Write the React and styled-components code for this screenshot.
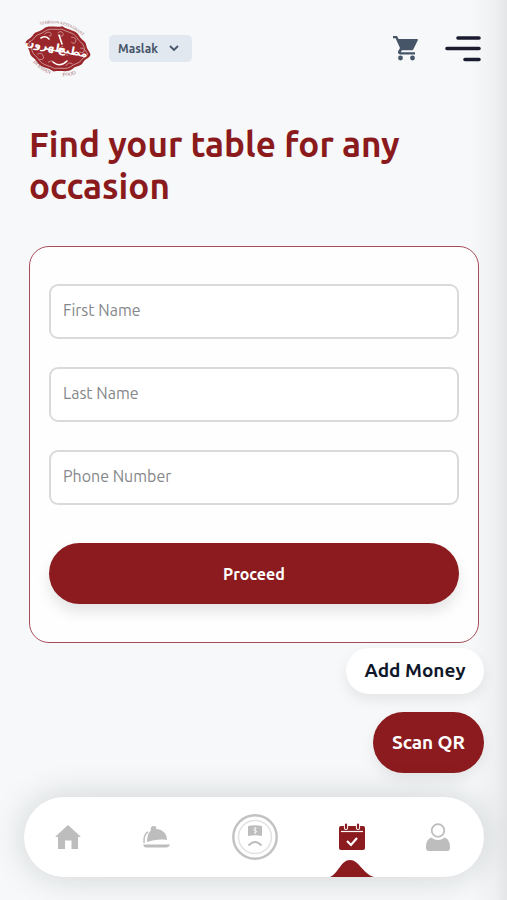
import React, { useState } from 'react';
import styled, { createGlobalStyle } from 'styled-components';

const GlobalStyle = createGlobalStyle`
  * {
    box-sizing: border-box;
  }
  body {
    margin: 0;
    background-color: #f6f8f9;
    font-family: 'Ubuntu', 'Noto Sans', sans-serif;
  }
  button, input, select {
    font-family: inherit;
  }
`;

const Page = styled.div`
  display: flex;
  flex-direction: column;
  min-height: 100vh;
  padding: 20px 23px 23px 24px;
  overflow: hidden;
  background: linear-gradient(to left, #e3e5e7 0, #eef0f1 12px, #f6f8f9 36px);
`;

const Header = styled.header`
  display: flex;
  align-items: center;
  height: 56px;
`;

const LogoLink = styled.a`
  display: block;
  width: 70px;
  height: 60px;
  margin-right: 15px;
`;

const BranchPicker = styled.label`
  display: grid;
  align-items: center;
  width: 83px;
  height: 27px;
  border-radius: 5px;
  background-color: #e2e8f0;
  color: #475569;

  > * {
    grid-area: 1 / 1;
  }
  > svg {
    justify-self: end;
    margin-right: 12px;
    pointer-events: none;
  }
`;

const BranchSelect = styled.select`
  appearance: none;
  width: 100%;
  height: 100%;
  padding: 0 24px 0 9px;
  border: none;
  background: transparent;
  color: inherit;
  font-size: 12px;
  font-weight: 600;
`;

const Actions = styled.div`
  display: flex;
  align-items: center;
  gap: 27px;
  margin-left: auto;
  padding-right: 3px;
`;

const IconButton = styled.button`
  display: flex;
  padding: 0;
  border: none;
  background: none;
  cursor: pointer;
`;

const Title = styled.h1`
  margin: 47px 5px 39px;
  color: #8b1a1d;
  font-size: 35px;
  font-weight: 600;
  line-height: 42px;
`;

const Form = styled.form`
  display: flex;
  flex-direction: column;
  gap: 28px;
  margin: 0 5px;
  padding: 37px 19px 38px;
  border: 1px solid #a64d59;
  border-radius: 20px;
  background-color: #fefefe;
`;

const Field = styled.input`
  width: 100%;
  height: 55px;
  padding: 0 12px 4px;
  border: 2px solid #dadada;
  border-radius: 9px;
  background-color: #fff;
  color: #333;
  font-size: 16px;

  &::placeholder {
    color: #85878a;
    opacity: 1;
  }
`;

const ProceedButton = styled.button`
  height: 61px;
  margin-top: 10px;
  border: none;
  border-radius: 31px;
  background-color: #8b1b1e;
  box-shadow: 0 8px 14px rgba(0, 0, 0, 0.1);
  color: #fff;
  font-size: 16px;
  font-weight: 600;
  cursor: pointer;
`;

const FloatingActions = styled.div`
  display: flex;
  flex-direction: column;
  align-items: flex-end;
  gap: 18px;
  margin-top: 5px;
`;

const PillButton = styled.button`
  min-width: ${props => (props.$primary ? 111 : 138)}px;
  height: ${props => (props.$primary ? 61 : 46)}px;
  padding: 0 16px 2px;
  border: none;
  border-radius: 31px;
  background-color: ${props => (props.$primary ? '#8b1b1e' : '#fff')};
  box-shadow: 0 6px 14px rgba(0, 0, 0, 0.08);
  color: ${props => (props.$primary ? '#fff' : '#0f172a')};
  font-size: 19px;
  font-weight: 600;
  cursor: pointer;
`;

const NavBar = styled.nav`
  display: flex;
  justify-content: space-between;
  height: 80px;
  margin-top: auto;
  padding: 0 34px 0 31px;
  border-radius: 40px;
  background-color: #fff;
  box-shadow: 0 0 34px rgba(20, 24, 30, 0.17);
`;

const NavItem = styled.a`
  position: relative;
  display: flex;
  align-items: center;
  justify-content: center;
  color: ${props => (props.$active ? '#8b1b1e' : '#bdbdbd')};
`;

const ActiveMark = styled.svg`
  position: absolute;
  bottom: 0;
  width: 44px;
  height: 17px;
`;

const Logo = () => (
  <svg width="70" height="60" viewBox="0 0 70 60" aria-hidden="true">
    <defs>
      <path id="logo-top" d="M16 7 Q44 0 65 24" />
      <path id="logo-bottom" d="M9 44 Q28 66 58 54" />
    </defs>
    <g transform="rotate(11 35 31)">
      <path
        d="M1 31 C2 27 5 27 7 22 C8 18 13 18 16 14 C20 9 27 11 34 8 C41 11 48 9 52 14 C55 18 60 18 61 22 C63 27 66 27 67 31 C66 35 63 35 61 40 C60 44 55 44 52 48 C48 53 41 51 34 54 C27 51 20 53 16 48 C13 44 8 44 7 40 C5 35 2 35 1 31 Z"
        fill="#98262a"
      />
      <path
        d="M4 31 C5 28 8 28 9 24 C11 20 15 20 18 16 C22 12 28 13 34 11 C40 13 46 12 50 16 C53 20 57 20 59 24 C60 28 63 28 64 31 C63 34 60 34 59 38 C57 42 53 42 50 46 C46 50 40 49 34 51 C28 49 22 50 18 46 C15 42 11 42 9 38 C8 34 5 34 4 31 Z"
        fill="none"
        stroke="#dcb4b6"
        strokeWidth="0.7"
      />
      <g fill="none" stroke="#d29c9f" strokeWidth="0.8" strokeLinecap="round">
        <path d="M18 19q3-4 6-2q2 3-1 3M31 15q3-3 5 0t-3 3M45 17q5-1 5 3t-4 2M56 26q4-1 4 2t-4 2" />
        <path d="M15 40q4-3 6 1t-3 4M27 46q4-4 6 0M45 46q2-5 6-3" />
      </g>
    </g>
    <g
      fill="#fff"
      fontFamily="'DejaVu Sans', sans-serif"
      fontSize="11"
      fontWeight="700"
      textAnchor="middle"
      transform="rotate(11 35 31)"
    >
      <text x="49" y="34">مطبخ</text>
      <text x="21" y="34">طهرون</text>
    </g>
    <g fill="none" stroke="#fff" strokeWidth="1.600" strokeLinecap="round">
      <path d="M29 44Q36 50 43 43M35 17L38 26M17 20Q22 17 25 21" />
    </g>
    <g fill="#9d666b" fontFamily="'Liberation Serif', serif">
      <text fontSize="4">
        <textPath href="#logo-top">TEHROON RESTAURANT</textPath>
      </text>
      <text fontSize="5">
        <textPath href="#logo-bottom">IRANIAN</textPath>
      </text>
      <text fontSize="5">
        <textPath href="#logo-bottom" startOffset="34">FOOD</textPath>
      </text>
    </g>
  </svg>
);

const ChevronIcon = () => (
  <svg width="12" height="12" viewBox="0 0 12 12" fill="none" stroke="currentColor" strokeWidth="1.8" aria-hidden="true">
    <path d="M2 4l4 4 4-4" />
  </svg>
);

const CartIcon = () => (
  <svg width="25" height="26" viewBox="0 0 25 26" fill="#475569" aria-hidden="true">
    <path d="M0 1h4l1.600 3H24c.8 0 1.100.7.800 1.300l-4.300 8.600c-.4.800-1.100 1.300-2 1.300H8.900l-1.100 2.100H22V19.500H7.300c-1.900 0-2.900-1.900-2-3.500l1.700-3L2.600 3.200H0z" />
    <circle cx="7.500" cy="23" r="2.400" />
    <circle cx="19.500" cy="23" r="2.400" />
  </svg>
);

const MenuIcon = () => (
  <svg width="36" height="27" viewBox="0 0 36 27" fill="none" stroke="#1b1b2f" strokeWidth="3.600" strokeLinecap="round" aria-hidden="true">
    <path d="M13 3h21M2 13.500h32M20 24.500h14" />
  </svg>
);

const HomeIcon = () => (
  <svg width="26" height="24" viewBox="0 0 26 24" fill="currentColor" aria-hidden="true">
    <path d="M13 0L26 12H23V24H16.500V15.500H10V24H3V12H0z" />
  </svg>
);

const DishIcon = () => (
  <svg width="28" height="24" viewBox="0 0 28 24" aria-hidden="true">
    <path d="M5 17C5 12 6 8 9 5C8 2 10 1 12 1C14 1 15 3 14 4C20 4 25 8 25 15C18 14 11 15 5 17Z" fill="currentColor" />
    <path d="M6 7C2 9 2 13 2 18" fill="none" stroke="currentColor" strokeWidth="1.500" />
    <path d="M1 19.500H28Q27 22.500 24 22.500H4Q2 22.500 1 19.500Z" fill="currentColor" />
  </svg>
);

const CoinIcon = () => (
  <svg width="46" height="46" viewBox="0 0 46 46" fill="none" aria-hidden="true">
    <circle cx="23" cy="23" r="21.700" stroke="#c2c2c2" strokeWidth="2.400" />
    <circle cx="23" cy="23" r="16.500" stroke="#e2e2e2" strokeWidth="1.500" />
    <path d="M16 12Q23 10.500 30 12V22Q23 20.500 16 22Z" fill="#bdbdbd" />
    <path d="M24.500 14Q21.500 14 22 15.700T24.500 17.300T22 19M23.300 13v7" stroke="#f1f1f1" strokeWidth="1" />
    <path d="M16.500 31.500Q23 24.500 29.500 31.500" stroke="#bdbdbd" strokeWidth="2" />
  </svg>
);

const CalendarIcon = () => (
  <svg width="26" height="28" viewBox="0 0 26 28" fill="none" aria-hidden="true">
    <path d="M2 3H24Q26 3 26 5V25Q26 27 24 27H2Q0 27 0 25V5Q0 3 2 3Z" fill="currentColor" />
    <path d="M2 8.500H24" stroke="#fff" strokeWidth="1.200" />
    <path d="M7 2.500V5M19 2.500V5" stroke="#fff" strokeWidth="4.200" strokeLinecap="round" />
    <path d="M7 1.500V5M19 1.500V5" stroke="currentColor" strokeWidth="2.200" strokeLinecap="round" />
    <path d="M8 18L12 22L18 15" stroke="#fff" strokeWidth="2.200" />
  </svg>
);

const UserIcon = () => (
  <svg width="24" height="28" viewBox="0 0 24 28" fill="none" aria-hidden="true">
    <path d="M5 14.500C7 15.500 9 17 12 17C15 17 17 15.500 19 14.500C22 16 24 19 24 24V25Q24 28 21 28H3Q0 28 0 25V24C0 19 2 16 5 14.500Z" fill="currentColor" />
    <circle cx="12" cy="7.500" r="6.300" fill="#fff" stroke="currentColor" strokeWidth="1.800" />
  </svg>
);

const navItems = [
  { label: 'Home', href: '#home', icon: HomeIcon },
  { label: 'Menu', href: '#menu', icon: DishIcon },
  { label: 'Wallet', href: '#wallet', icon: CoinIcon },
  { label: 'Reservation', href: '#reservation', icon: CalendarIcon },
  { label: 'Profile', href: '#profile', icon: UserIcon },
];

const fields = [
  { name: 'firstName', label: 'First Name', type: 'text' },
  { name: 'lastName', label: 'Last Name', type: 'text' },
  { name: 'phone', label: 'Phone Number', type: 'tel' },
];

const App = () => {
  const [values, setValues] = useState({ firstName: '', lastName: '', phone: '' });
  const [active, setActive] = useState('Reservation');

  const handleChange = (e) => {
    setValues({ ...values, [e.target.name]: e.target.value });
  };

  return (
    <>
      <GlobalStyle />
      <Page>
        <Header>
          <LogoLink href="#home" aria-label="Tehroon Restaurant">
            <Logo />
          </LogoLink>
          <BranchPicker>
            <BranchSelect aria-label="Branch" defaultValue="maslak">
              <option value="maslak">Maslak</option>
            </BranchSelect>
            <ChevronIcon />
          </BranchPicker>
          <Actions>
            <IconButton type="button" aria-label="Cart">
              <CartIcon />
            </IconButton>
            <IconButton type="button" aria-label="Open menu">
              <MenuIcon />
            </IconButton>
          </Actions>
        </Header>

        <Title>Find your table for any occasion</Title>

        <Form onSubmit={(e) => e.preventDefault()}>
          {fields.map(field => (
            <Field
              key={field.name}
              name={field.name}
              type={field.type}
              aria-label={field.label}
              placeholder={field.label}
              value={values[field.name]}
              onChange={handleChange}
            />
          ))}
          <ProceedButton type="submit">Proceed</ProceedButton>
        </Form>

        <FloatingActions>
          <PillButton type="button">Add Money</PillButton>
          <PillButton type="button" $primary>Scan QR</PillButton>
        </FloatingActions>

        <NavBar>
          {navItems.map(({ label, href, icon: Icon }) => (
            <NavItem
              key={label}
              href={href}
              aria-label={label}
              $active={label === active}
              onClick={() => setActive(label)}
            >
              <Icon />
              {label === active && (
                <ActiveMark viewBox="0 0 44 17" aria-hidden="true">
                  <path d="M0 17C8 14 11 0 20 0C29 0 33 14 44 17Z" fill="currentColor" />
                </ActiveMark>
              )}
            </NavItem>
          ))}
        </NavBar>
      </Page>
    </>
  );
};

export default App;
